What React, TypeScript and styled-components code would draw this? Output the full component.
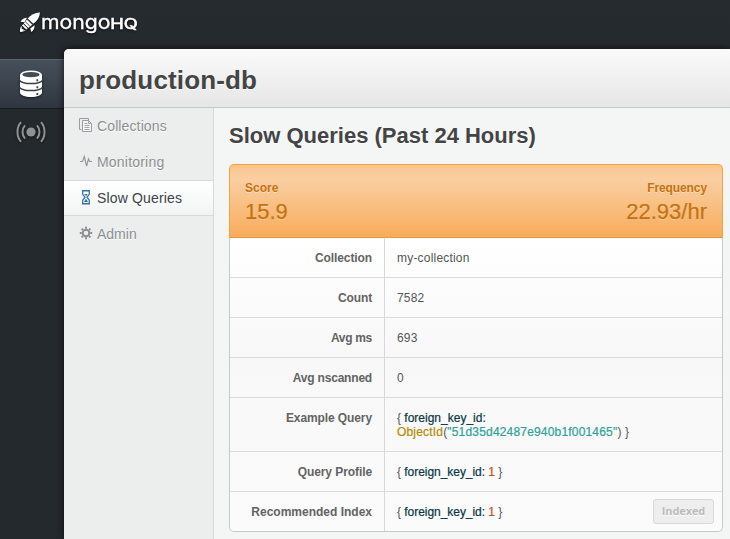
import React from "react";
import styled, { createGlobalStyle, css } from "styled-components";

const GlobalStyle = createGlobalStyle`
  * { box-sizing: border-box; }
  body {
    margin: 0;
    overflow: hidden;
    background: #24292d;
    font-family: "Liberation Sans", Arial, sans-serif;
    color: #555;
  }
`;

const Page = styled.div`
  width: 730px;
  height: 539px;
  display: flex;
  flex-direction: column;
  overflow: hidden;
  background: linear-gradient(#262b30, #24292d 60px);
`;

const TopBar = styled.header`
  height: 49px;
  flex: none;
  padding: 8px 0 0 18px;
`;

const LogoSvg = styled.svg`
  display: block;
  filter: drop-shadow(0 1px 1px rgba(0, 0, 0, 0.7));
`;

const Body = styled.div`
  flex: 1;
  display: flex;
  min-height: 0;
`;

const Rail = styled.nav`
  width: 64px;
  flex: none;
  padding-top: 10px;
`;

const RailItem = styled.div<{ $active?: boolean }>`
  height: 46px;
  display: flex;
  align-items: center;
  justify-content: center;
  padding-right: 2px;
  ${(p) =>
    p.$active &&
    css`
      border-top: 1px solid #5c6770;
      border-bottom: 1px solid #171a1d;
      background: linear-gradient(#46505a, #303640);
      height: 50px;
    `}
  svg {
    display: block;
    filter: drop-shadow(0 1px 1px rgba(0, 0, 0, 0.6));
  }
`;

const Panel = styled.main`
  flex: 1;
  display: flex;
  flex-direction: column;
  background: #f4f6f6;
  border-top-left-radius: 5px;
  overflow: hidden;
  box-shadow: 0 0 7px rgba(0, 0, 0, 0.75);
`;

const PanelHeader = styled.div`
  height: 59px;
  flex: none;
  border-bottom: 1px solid #c9cbcb;
  background: linear-gradient(#fafafa, #e6e6e6);
  padding: 15px 0 0 15px;
`;

const DbName = styled.h1`
  margin: 0;
  font-size: 26px;
  line-height: 32px;
  letter-spacing: 0.15px;
  color: #444;
  text-shadow: 0 1px 0 #fff;
`;

const Columns = styled.div`
  flex: 1;
  display: flex;
`;

const Side = styled.nav`
  width: 150px;
  flex: none;
  background: #ebeeed;
  border-right: 1px solid #d8dada;
`;

const SideItem = styled.div<{ $active?: boolean }>`
  height: 36px;
  display: flex;
  align-items: center;
  padding-left: 14px;
  font-size: 14px;
  color: ${(p) => (p.$active ? "#3c4246" : "#8b8f92")};
  text-shadow: 0 1px 0 #fff;
  border-top: 1px solid transparent;
  border-bottom: 1px solid transparent;
  ${(p) =>
    p.$active &&
    css`
      background: linear-gradient(#fff, #f2f4f4);
      border-color: #d8dada;
    `}
  svg {
    flex: none;
    margin: -2px 3px 0 0;
  }
`;

const SideLabel = styled.span<{ $track: number }>`
  letter-spacing: ${(p) => p.$track}px;
`;

const Content = styled.section`
  padding: 14px 7px 0 15px;
  flex: 1;
`;

const Title = styled.h2`
  margin: 0 0 14px;
  font-size: 22px;
  line-height: 28px;
  color: #444;
  text-shadow: 0 1px 0 #fff;
`;

const Card = styled.div`
  width: 494px;
`;

const Summary = styled.div`
  height: 74px;
  display: flex;
  justify-content: space-between;
  padding: 15px 15px 0;
  border: 1px solid #f5a33f;
  border-bottom-color: #ee9632;
  border-radius: 5px 5px 0 0;
  background: linear-gradient(#f9c48c, #f9cfa2 14px, #f8ac5c);
  color: #c5720f;
  text-shadow: 0 1px 0 rgba(255, 255, 255, 0.45);
`;

const Metric = styled.div<{ $right?: boolean }>`
  text-align: ${(p) => (p.$right ? "right" : "left")};
`;

const MetricLabel = styled.div`
  font-size: 12px;
  line-height: 16px;
  font-weight: bold;
`;

const MetricValue = styled.div`
  font-size: 22px;
  line-height: 32px;
  -webkit-text-stroke: 0.25px currentColor;
`;

const Rows = styled.div`
  border: 1px solid #c6c9c9;
  border-top: 0;
  border-radius: 0 0 5px 5px;
  background: linear-gradient(#fff, #f8f8f8 120px, #fbfbfb);
`;

const Row = styled.div<{ $tall?: boolean }>`
  height: ${(p) => (p.$tall ? 54 : 40)}px;
  display: flex;
  font-size: 12px;
  line-height: 14px;
  border-bottom: 1px solid #dadcdc;
  &:last-child {
    height: 39px;
    border-bottom: 0;
  }
`;

const Key = styled.div<{ $track: number }>`
  width: 155px;
  flex: none;
  padding: 13px 12px 0 0;
  border-right: 1px solid #d6d9d9;
  text-align: right;
  font-weight: bold;
  color: #636363;
  letter-spacing: ${(p) => p.$track}px;
`;

const Value = styled.div<{ $track?: number }>`
  flex: 1;
  padding: 13px 8px 0 12px;
  display: flex;
  justify-content: space-between;
  white-space: nowrap;
  color: #555;
  letter-spacing: ${(p) => p.$track ?? 0}px;
`;

const Code = styled.code<{ $track?: number }>`
  font-family: inherit;
  letter-spacing: ${(p) => p.$track ?? 0}px;
`;

const Tracked = styled.span<{ $track: number }>`
  letter-spacing: ${(p) => p.$track}px;
`;

const Token = styled.span<{ $kind: "key" | "fn" | "str" | "num" }>`
  color: ${(p) => ({ key: "#073642", fn: "#b58900", str: "#2aa198", num: "#cb4b16" })[p.$kind]};
  -webkit-text-stroke: 0.2px currentColor;
`;

const IndexedButton = styled.button`
  width: 61px;
  height: 25px;
  margin-top: -6px;
  padding: 0 0 2px;
  border: 1px solid #d9d9d9;
  border-radius: 3px;
  background: #eee;
  color: #bbb;
  font: bold 11px "Open Sans", sans-serif;
  letter-spacing: -0.1px;
  text-shadow: 0 1px 0 #fff;
`;

const Logo = () => (
  <LogoSvg width="124" height="30" viewBox="18 8 124 30" fill="#fff">
    <path d="M40 12.400c-5.600.4-9.400 2.400-12.300 6.200l5.600 5.200c3.900-2.900 6.300-6.400 6.700-11.400z" />
    <path d="M27.200 19.200l-3.500 4.300 4.600 4.500 4.300-3.600z" />
    <path d="M27 17.800c-3 0-5 1.300-6.500 4l4 .4zM34.500 25.200c.3 2.900-.8 5.100-3.200 6.900l-1.100-3.700z" />
    <path d="M23.200 24l-1.200 1.500 4.200 4 1.600-1.200zM21.500 26c-1.200 1-1.600 3-1.500 5.900 3-.1 4.800-.5 5.700-1.800l-2.600.3.600-1.500-1.800.4z" />
    <path d="M27 19.300l5.400 5.200M25.200 21.600l4.900 4.800M23.500 23.700l4.500 4.400" stroke="#24292d" strokeWidth=".8" />
    <text x="41" y="29" fontFamily="Inter" fontSize="19.500" textLength="69.500" lengthAdjust="spacingAndGlyphs" stroke="#fff" strokeWidth=".3">mongo</text>
    <text x="110.300" y="29" fontFamily="Inter" fontSize="14.500" textLength="27.500" lengthAdjust="spacingAndGlyphs" stroke="#fff" strokeWidth=".6">HQ</text>
  </LogoSvg>
);

const DatabaseIcon = () => (
  <svg width="24" height="28" viewBox="0 0 24 28">
    <path d="M1 5v17.500c0 2.500 5 4.500 11 4.500s11-2 11-4.500V5z" fill="#fff" />
    <ellipse cx="12" cy="5" rx="11" ry="4.500" fill="#fff" />
    <ellipse cx="12" cy="4.700" rx="8.600" ry="2.600" fill="#434c55" />
    <path d="M0 9.800c2 3 6.500 3.800 12 3.800s10-.8 12-3.800M0 16.800c2 3 6.500 3.800 12 3.800s10-.8 12-3.800" fill="none" stroke="#373e47" strokeWidth="1.500" />
    <path d="M18.300 9.300v2M18.300 16.200v2M18.300 23v2" stroke="#373e47" strokeWidth="1.800" />
  </svg>
);

const BroadcastIcon = () => (
  <svg width="30" height="22" viewBox="0 0 30 22" fill="none" stroke="#8e9295" strokeWidth="2">
    <circle cx="15" cy="11" r="4.600" fill="#8e9295" stroke="none" />
    <path d="M5 1.200C.3 6.500.3 15.500 5 20.800M9 4.300C5.700 8 5.700 14 9 17.700M25 1.200c4.700 5.300 4.700 14.300 0 19.600M21 4.300c3.300 3.700 3.300 9.700 0 13.400" />
  </svg>
);

const CollectionsIcon = () => (
  <svg width="16" height="16" viewBox="0 0 16 16" fill="none" stroke="#999da0">
    <path d="M3.500 12.500h-2v-11h9v2" />
    <path d="M4.500 3.500h6l3 3v8h-9z" fill="#f4f6f6" />
    <path d="M10.500 3.500v3h3M6.500 6.500h3M6.500 8.500h5M6.500 10.500h5M6.500 12.500h5" strokeWidth=".9" />
  </svg>
);

const PulseIcon = () => (
  <svg width="16" height="16" viewBox="0 0 16 16" fill="none" stroke="#94989b" strokeWidth="1.200">
    <path d="M2 8.500h2.500L6.300 3.500l2.300 9.500L10.500 6l1.300 2.500H14" />
  </svg>
);

const HourglassIcon = () => (
  <svg width="16" height="16" viewBox="0 0 16 16" fill="none" stroke="#3573a8">
    <path d="M4 1.800h8M4 14.700h8" strokeWidth="1.600" />
    <path d="M4.700 2v3.300L7 8.200l-2.300 3V14M11.300 2v3.300L9 8.200l2.300 3V14" strokeWidth="1.300" />
    <path d="M6.300 5h3.400L8 7.200zM8 9.500l2 3.500H6z" fill="#3573a8" stroke="none" />
  </svg>
);

const GearIcon = () => (
  <svg width="16" height="16" viewBox="0 0 16 16" fill="none" stroke="#8b8f92">
    <circle cx="8" cy="8" r="3.300" strokeWidth="2" />
    <path d="M8 1.800v2M8 12.200v2M1.800 8h2M12.200 8h2M3.600 3.600L5 5M11 11l1.400 1.400M3.600 12.400L5 11M11 5l1.400-1.400" strokeWidth="2" />
  </svg>
);

const Pattern = () => (
  <Code $track={-0.04}>
    {"{ "}
    <Token $kind="key">foreign_key_id:</Token> <Token $kind="num">1</Token>
    {" }"}
  </Code>
);

export default function App() {
  return (
    <>
      <GlobalStyle />
      <Page>
        <TopBar>
          <Logo />
        </TopBar>
        <Body>
          <Rail>
            <RailItem $active>
              <DatabaseIcon />
            </RailItem>
            <RailItem>
              <BroadcastIcon />
            </RailItem>
          </Rail>
          <Panel>
            <PanelHeader>
              <DbName>production-db</DbName>
            </PanelHeader>
            <Columns>
              <Side>
                <SideItem><CollectionsIcon /><SideLabel $track={0.12}>Collections</SideLabel></SideItem>
                <SideItem><PulseIcon /><SideLabel $track={0.2}>Monitoring</SideLabel></SideItem>
                <SideItem $active><HourglassIcon /><SideLabel $track={0.15}>Slow Queries</SideLabel></SideItem>
                <SideItem><GearIcon /><SideLabel $track={0}>Admin</SideLabel></SideItem>
              </Side>
              <Content>
                <Title>Slow Queries (Past 24 Hours)</Title>
                <Card>
                  <Summary>
                    <Metric>
                      <MetricLabel>Score</MetricLabel>
                      <MetricValue>15.9</MetricValue>
                    </Metric>
                    <Metric $right>
                      <MetricLabel><Tracked $track={-0.1}>Frequency</Tracked></MetricLabel>
                      <MetricValue>22.93/hr</MetricValue>
                    </Metric>
                  </Summary>
                  <Rows>
                    <Row><Key $track={-0.1}>Collection</Key><Value $track={0.2}>my-collection</Value></Row>
                    <Row><Key $track={-0.15}>Count</Key><Value $track={0.2}>7582</Value></Row>
                    <Row><Key $track={-0.3}>Avg ms</Key><Value $track={0.2}>693</Value></Row>
                    <Row><Key $track={-0.2}>Avg nscanned</Key><Value>0</Value></Row>
                    <Row $tall>
                      <Key $track={-0.1}>Example Query</Key>
                      <Value>
                        <Code>
                          {"{ "}<Token $kind="key">foreign_key_id:</Token>
                          <br />
                          <Tracked $track={0.18}>
                            <Token $kind="fn">ObjectId</Token>(<Token $kind="str">"51d35d42487e940b1f001465"</Token>{") }"}
                          </Tracked>
                        </Code>
                      </Value>
                    </Row>
                    <Row><Key $track={-0.08}>Query Profile</Key><Value><Pattern /></Value></Row>
                    <Row>
                      <Key $track={0}>Recommended Index</Key>
                      <Value><Pattern /><IndexedButton>Indexed</IndexedButton></Value>
                    </Row>
                  </Rows>
                </Card>
              </Content>
            </Columns>
          </Panel>
        </Body>
      </Page>
    </>
  );
}
